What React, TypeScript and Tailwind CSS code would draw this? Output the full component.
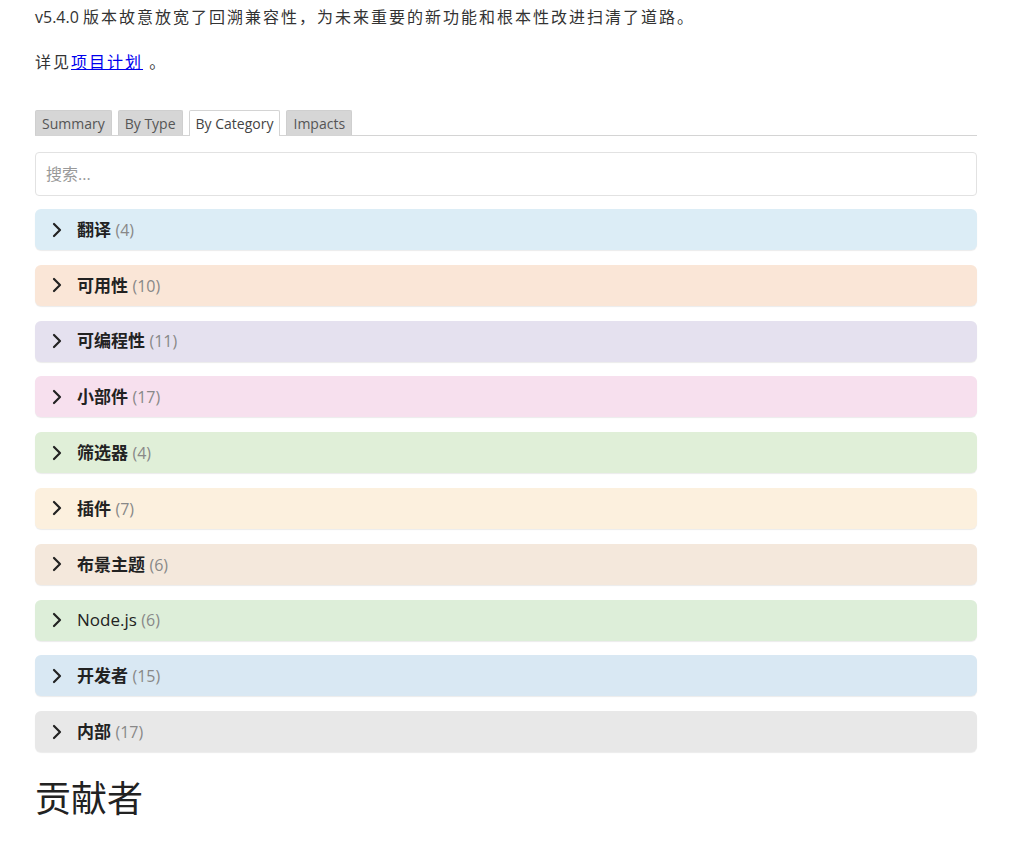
const FONT = "font-['Open_Sans','Noto_Sans_CJK_SC',sans-serif]";

const CATEGORIES = [
  { name: "翻译", count: 4, bg: "bg-[#dcedf6]" },
  { name: "可用性", count: 10, bg: "bg-[#fae6d7]" },
  { name: "可编程性", count: 11, bg: "bg-[#e5e1ef]" },
  { name: "小部件", count: 17, bg: "bg-[#f7e0ee]" },
  { name: "筛选器", count: 4, bg: "bg-[#e0efd8]" },
  { name: "插件", count: 7, bg: "bg-[#fcf0de]" },
  { name: "布景主题", count: 6, bg: "bg-[#f4e8dc]" },
  { name: "Node.js", count: 6, bg: "bg-[#ddeed9]" },
  { name: "开发者", count: 15, bg: "bg-[#d9e8f3]" },
  { name: "内部", count: 17, bg: "bg-[#e8e8e8]" },
];

const TABS = ["Summary", "By Type", "By Category", "Impacts"];

function Chevron() {
  return (
    <svg width="12" height="16" viewBox="0 0 12 16" className="shrink-0">
      <path d="M3 2 L9 8 L3 14" fill="none" stroke="#222" strokeWidth="2.2" strokeLinecap="round" strokeLinejoin="round" />
    </svg>
  );
}

export default function App() {
  return (
    <div className={`${FONT} bg-white text-[#333] w-[1012px] h-[845px] overflow-hidden`}>
      <div className="ml-[35px] w-[942px] pt-[4px]">
        <p className="text-[16px] leading-[26px]">
          v5.4.0 <span className="tracking-[2px]">版本故意放宽了回溯兼容性，为未来重要的新功能和根本性改进扫清了道路。</span>
        </p>
        <p className="text-[16px] leading-[26px] mt-[19px] tracking-[2px]">
          详见<a href="#" className="text-[#0000ee] underline">项目计划</a> 。
        </p>

        {/* tabs */}
        <div className="mt-[35px] flex items-end gap-[6px] border-b border-[#d4d4d4] h-[26px]">
          {TABS.map((t) => {
            const active = t === "By Category";
            return (
              <div
                key={t}
                className={`h-[25px] px-[6px] text-[14px] leading-[25px] border border-b-0 rounded-t-[2px] ${
                  active ? "bg-white border-[#d4d4d4] text-[#444] -mb-px h-[26px]" : "bg-[#d6d6d6] border-[#cfcfcf] text-[#555]"
                }`}
              >
                {t}
              </div>
            );
          })}
        </div>

        {/* search */}
        <div className="mt-[16px] h-[44px] border border-[#e2e2e2] rounded-[4px] flex items-center px-[10px] text-[16px] text-[#999]">
          搜索...
        </div>

        {/* categories */}
        <div className="mt-[13px] flex flex-col gap-[14.8px]">
          {CATEGORIES.map((c) => (
            <div
              key={c.name}
              className={`${c.bg} h-[41px] rounded-[6px] flex items-center pl-[16px] gap-[14px] shadow-[0_1px_1px_rgba(0,0,0,0.08)]`}
            >
              <Chevron />
              <span className="text-[17px] text-[#222]">
                <span className={c.name === "Node.js" ? "font-normal" : "font-bold"}>{c.name}</span>{" "}
                <span className="text-[#888] font-normal text-[16px]">({c.count})</span>
              </span>
            </div>
          ))}
        </div>

        <h2 className="mt-[23px] text-[36px] leading-[48px] text-[#222] font-normal">贡献者</h2>
      </div>
    </div>
  );
}
